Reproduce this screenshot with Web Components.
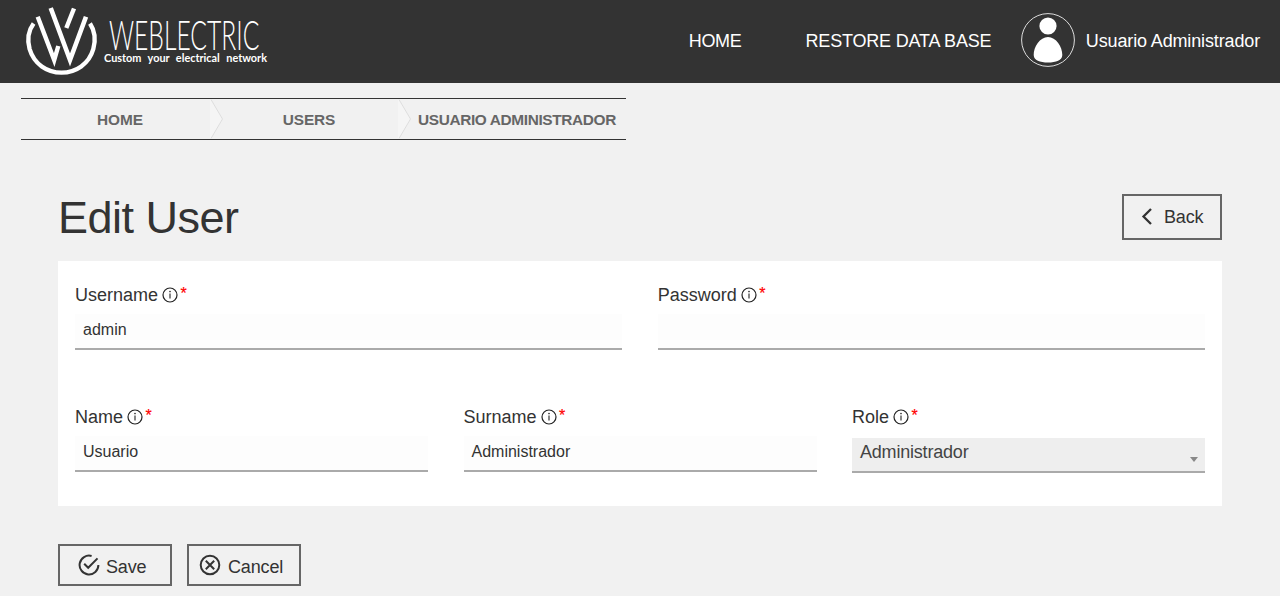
<!DOCTYPE html>
<html lang="en">
<head>
<meta charset="utf-8">
<title>Edit User</title>
<style>
html,body{margin:0;height:100%}
body{background:#f1f1f1;font:18px/22px "Liberation Sans",Arial,sans-serif;color:#333;overflow:hidden}
</style>
</head>
<body>
<user-page></user-page>
<script>
function define(name, render) {
  customElements.define(name, class extends HTMLElement {
    constructor() {
      super();
      this.attachShadow({ mode: 'open' });
    }
    connectedCallback() {
      this.shadowRoot.innerHTML = render(this);
    }
  });
}

define('brand-logo', () => `
<style>:host{display:block;width:280px;height:83px}svg{display:block;overflow:visible}</style>
<svg width="280" height="83" viewBox="0 0 280 83" fill="none" stroke="#fff">
  <path d="M33.6 23.5C28 31 27.5 41 29.6 49C34 64 47 72.6 61.5 72.6C76 72.6 89 64 93.3 49C95.5 41 95 31 90 23.5" stroke-width="4.4"/>
  <path d="M37.7 16.8L54.2 60L58.3 46" stroke-width="4.4"/>
  <path d="M50.7 8L70 60L86 16.8" stroke-width="4.6"/>
  <path d="M74 8.5L66.3 28" stroke-width="4.4"/>
  <g fill="#fff" stroke="none">
    <text x="109" y="50.5" font-family="Lato" font-weight="300" font-size="41" textLength="281" lengthAdjust="spacingAndGlyphs" transform="translate(109 0) scale(.535 1) translate(-109 0)">WEBLECTRIC</text>
    <text x="104" y="62" font-family="Lato,sans-serif" font-weight="700" font-size="11.5" word-spacing="4" textLength="163" lengthAdjust="spacingAndGlyphs">Custom your electrical network</text>
  </g>
</svg>`);

define('user-avatar', () => `
<style>:host{display:block;width:54px;height:54px}svg{display:block}</style>
<svg width="54" height="54" viewBox="0 0 54 54"><circle cx="27" cy="27" r="26.4" fill="none" stroke="#ddd" stroke-width="1"/><circle cx="27" cy="13" r="8.6" fill="#fff"/><path d="M27 24C35 24 41.5 34 41.3 42C41.2 47.5 35 49.5 27 49.5S12.8 47.5 12.7 42C12.5 34 19 24 27 24Z" fill="#fff"/></svg>`);

define('site-header', () => `
<style>
:host{display:flex;height:83px;background:#333;color:#fff;align-items:center;padding-right:20px;box-sizing:border-box}
nav{display:flex;align-items:center;margin-left:auto;white-space:nowrap}
.home{margin-right:64px;letter-spacing:-.3px}.db{margin-right:30px;letter-spacing:-.19px}
.user{margin-left:10.5px;letter-spacing:-.14px}
nav>span{margin-top:-2px}nav>user-avatar{margin-top:-3px}
</style>
<brand-logo></brand-logo>
<nav><span class="home">HOME</span><span class="db">RESTORE DATA BASE</span><user-avatar></user-avatar><span class="user">Usuario Administrador</span></nav>`);

define('crumb-bar', () => `
<style>
:host{display:grid;grid-template-columns:189px 188px 1fr;width:605px;height:42px;box-sizing:border-box;border-top:1px solid #333;border-bottom:1px solid #333;margin:15px 0 0 21px;font-size:15.4px;font-weight:bold;color:#666}
</style>
<slot></slot>`);

define('crumb-item', el => `
<style>
:host{display:flex;align-items:center;box-sizing:border-box;white-space:nowrap}
:host([first]) span{padding-left:9px}
:host([last]) span{letter-spacing:-.36px;text-align:left;padding-left:6px}
:host([middle]) span{letter-spacing:-.1px;padding-right:4px}
svg{flex:none;width:14px;height:40px}
span{flex:1;text-align:center;padding-top:1px}
</style>
${el.hasAttribute('first') ? '' : '<svg viewBox="0 0 14 40"><path d="M0 0H1L13 20L1 40H0Z" fill="#f5f5f5"/><path d="M1 .5L12.5 20L1 39.5" fill="none" stroke="#ddd"/></svg>'}
<span><slot></slot></span>`);

const icons = {
  back: '<svg width="12" height="18" viewBox="0 0 12 18"><path d="M10 1L2.5 8.5L10 16" fill="none" stroke="#333" stroke-width="2.3"/></svg>',
  save: '<svg width="22" height="22" viewBox="0 0 22 22" fill="none" stroke="#333" stroke-width="2"><path d="M13.6 2A9.4 9.4 0 1 0 20.4 11"/><path d="M6.2 9.8L10.2 13.8L19.5 4.4"/></svg>',
  cancel: '<svg width="22" height="22" viewBox="0 0 22 22" fill="none" stroke="#333" stroke-width="2"><circle cx="11" cy="11" r="9.3"/><path d="M6.8 6.8L15.2 15.2M15.2 6.8L6.8 15.2"/></svg>'
};
define('outline-button', el => `
<style>
:host{display:flex;align-items:center;box-sizing:border-box;border:2px solid #666;color:#333}
svg{display:block;flex:none}
span{padding-top:var(--drop,0);letter-spacing:-.15px}
</style>${icons[el.getAttribute('icon')]}<span><slot></slot></span>`);

define('form-field', el => {
  const select = el.hasAttribute('select');
  return `
<style>
:host{display:block;min-width:0}
.label{display:flex;height:22px;align-items:center}
.label svg{margin:-1px 0 0 4px;flex:none}
.star{color:#f00;font-size:16px;height:22px;line-height:20px;margin-left:2.5px;-webkit-text-stroke:.2px #f00}
.box{box-sizing:border-box;height:36px;margin-top:8px;border-bottom:2px solid #aaa;background:#fdfdfd;font-size:16px;line-height:32px;padding:0 8px}
.select{height:35px;margin-top:10px;background:#eee;font-size:18px;line-height:28px;display:flex;justify-content:space-between;color:#444;letter-spacing:-.2px}
.select svg{margin:19px -1px 0 0}
</style>
<div class="label"><span>${el.getAttribute('label')}</span><svg width="16" height="16" viewBox="0 0 16 16"><circle cx="8" cy="8" r="7" fill="none" stroke="#222" stroke-width="1.2"/><path d="M8 6.5V11.5" stroke="#222" stroke-width="1.1"/><circle cx="8" cy="4.6" r=".8" fill="#222"/></svg><span class="star">*</span></div>
<div class="box ${select ? 'select' : ''}"><slot></slot>${select ? '<svg width="8" height="5" viewBox="0 0 8 5"><path d="M0 0H8L4 5Z" fill="#888"/></svg>' : ''}</div>`;
});

define('user-form', () => `
<style>
:host{display:block;background:#fff;box-sizing:border-box;height:245px;padding:23px 17px 0}
.row{display:grid;gap:35.5px}
.two{grid-template-columns:1fr 1fr;height:122px}
.three{grid-template-columns:repeat(3,1fr)}
</style>
<div class="row two"><form-field label="Username">admin</form-field><form-field label="Password"></form-field></div>
<div class="row three"><form-field label="Name">Usuario</form-field><form-field label="Surname">Administrador</form-field><form-field label="Role" select>Administrador</form-field></div>`);

define('user-page', () => `
<style>
:host{display:block}
main{padding:54px 58px 0}
.top{display:flex;justify-content:space-between;height:67px}
h1{font-weight:400;font-size:45px;line-height:48px;margin:0;letter-spacing:-.5px}
.back{width:100px;height:46px;padding-left:17px;gap:11px}
.actions{display:flex;gap:15px;margin-top:38px}
.actions outline-button{width:114px;height:42px;--drop:3px}
.save{padding-left:18px;gap:6px}.cancel{padding-left:10px;gap:7px}
</style>
<site-header></site-header>
<crumb-bar><crumb-item first>HOME</crumb-item><crumb-item middle>USERS</crumb-item><crumb-item last>USUARIO ADMINISTRADOR</crumb-item></crumb-bar>
<main>
<div class="top"><h1>Edit User</h1><outline-button class="back" icon="back">Back</outline-button></div>
<user-form></user-form>
<div class="actions"><outline-button class="save" icon="save">Save</outline-button><outline-button class="cancel" icon="cancel">Cancel</outline-button></div>
</main>`);
</script>
</body>
</html>
